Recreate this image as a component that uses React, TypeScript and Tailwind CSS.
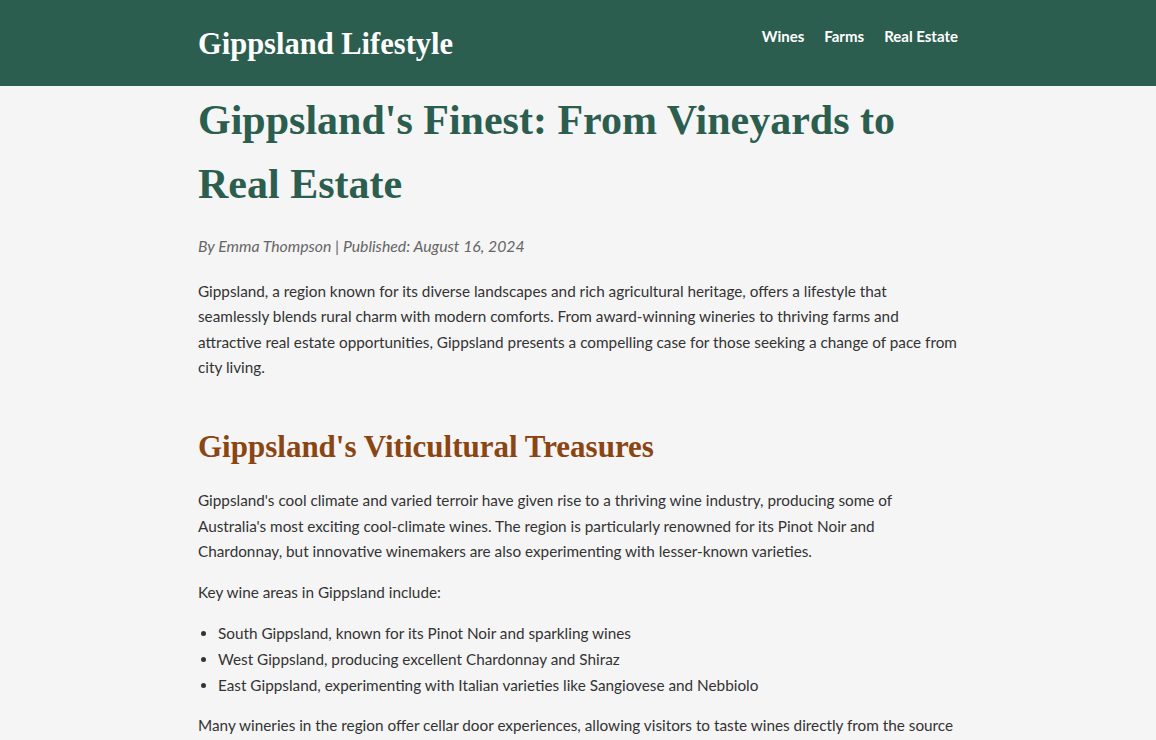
import React from 'react';

const serif = 'font-["Liberation_Serif","DejaVu_Serif",serif]';

const navLinks = ['Wines', 'Farms', 'Real Estate'];

const wineAreas = [
  'South Gippsland, known for its Pinot Noir and sparkling wines',
  'West Gippsland, producing excellent Chardonnay and Shiraz',
  'East Gippsland, experimenting with Italian varieties like Sangiovese and Nebbiolo',
];

export default function App() {
  return (
    <div className='min-h-screen bg-[#f5f5f5] font-["Lato","Noto_Sans",sans-serif] text-[#333333]'>
      {/* 顶部导航 */}
      <header className="bg-[#2c5e4f] h-[86px]">
        <div className="mx-auto flex max-w-[760px] items-start justify-between">
          <h1 className={`${serif} pt-[26px] text-[30.5px] font-bold leading-[36px] text-white`}>
            Gippsland Lifestyle
          </h1>
          <nav className="flex gap-5 pt-[24px]">
            {navLinks.map((link) => (
              <a key={link} href="#" className="text-[15px] font-bold leading-[24px] text-white">
                {link}
              </a>
            ))}
          </nav>
        </div>
      </header>

      {/* 正文 */}
      <main className="mx-auto max-w-[760px] pt-[2px]">
        <h1 className={`${serif} text-[42px] font-bold leading-[64px] text-[#2c5e4f]`}>
          Gippsland's Finest: From Vineyards to Real Estate
        </h1>

        <p className="mt-[17px] text-[15.8px] italic leading-[25.6px] text-[#666666]">
          By Emma Thompson | Published: August 16, 2024
        </p>

        <p className="mt-[20px] text-[15.3px] leading-[25.6px]">
          Gippsland, a region known for its diverse landscapes and rich agricultural heritage, offers a lifestyle that
          seamlessly blends rural charm with modern comforts. From award-winning wineries to thriving farms and
          attractive real estate opportunities, Gippsland presents a compelling case for those seeking a change of pace
          from city living.
        </p>

        <h2 className={`${serif} mt-[42px] text-[31px] font-bold leading-[48px] text-[#8b4513]`}>
          Gippsland's Viticultural Treasures
        </h2>

        <p className="mt-[17px] text-[15.3px] leading-[25.6px]">
          Gippsland's cool climate and varied terroir have given rise to a thriving wine industry, producing some of
          Australia's most exciting cool-climate wines. The region is particularly renowned for its Pinot Noir and
          Chardonnay, but innovative winemakers are also experimenting with lesser-known varieties.
        </p>

        <p className="mt-[15px] text-[15.3px] leading-[25.6px]">Key wine areas in Gippsland include:</p>

        <ul className="mt-[16px] list-disc pl-5 text-[15.3px] leading-[25.6px]">
          {wineAreas.map((area) => (
            <li key={area}>{area}</li>
          ))}
        </ul>

        <p className="mt-[15px] text-[15.3px] leading-[25.6px]">
          Many wineries in the region offer cellar door experiences, allowing visitors to taste wines directly from the
          source and meet the passionate people behind each bottle.
        </p>
      </main>
    </div>
  );
}
